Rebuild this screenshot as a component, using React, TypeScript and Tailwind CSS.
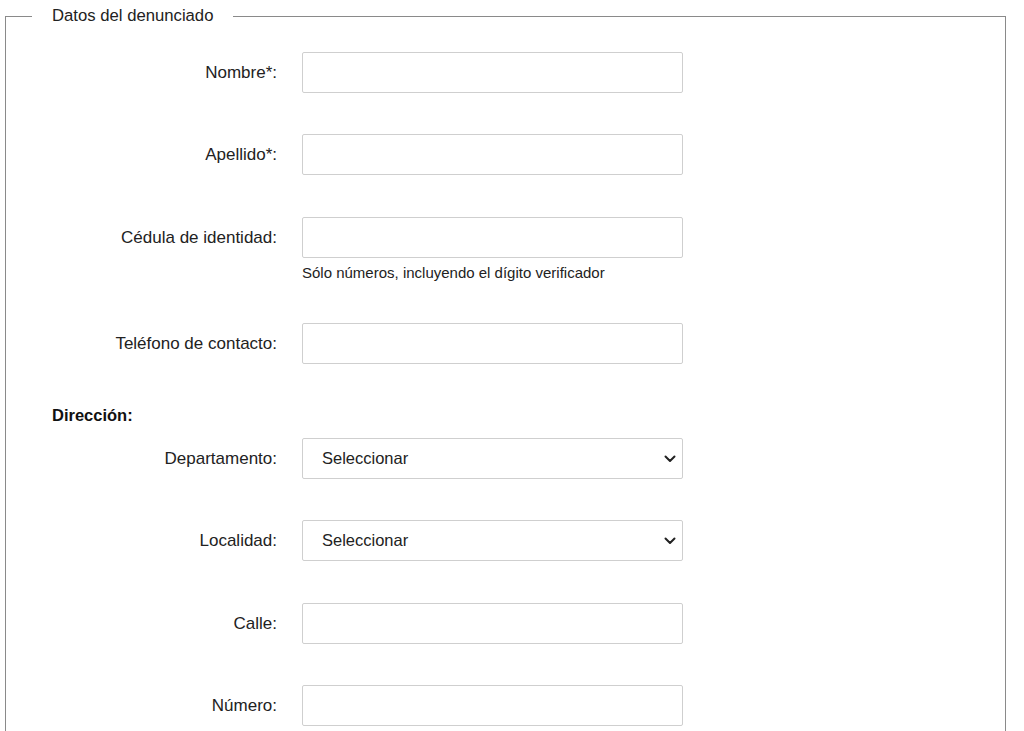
import React from "react";

const font = { fontFamily: '"Liberation Sans", Arial, sans-serif' };

function Chevron() {
  return (
    <svg width="12" height="8" viewBox="0 0 12 8" className="absolute right-[6px] top-1/2 -translate-y-1/2" aria-hidden>
      <path d="M1.5 1.5 L6 6 L10.5 1.5" fill="none" stroke="#222" strokeWidth="2" strokeLinecap="round" strokeLinejoin="round" />
    </svg>
  );
}

function Row({ label, select, help }: { label: string; select?: boolean; help?: string }) {
  return (
    <div className="flex items-start">
      <div className="w-[271px] h-[41px] flex items-center justify-end text-[17px] text-[#222]">{label}</div>
      <div className="ml-[25px] w-[381px]">
        {select ? (
          <div className="relative h-[41px] border border-[#cfcfcf] rounded-[2px] bg-white flex items-center pl-[19px] text-[16.5px] text-[#222]">
            Seleccionar
            <Chevron />
          </div>
        ) : (
          <div className="h-[41px] border border-[#cfcfcf] rounded-[2px] bg-white" />
        )}
        {help && <div className="mt-[6px] text-[15px] leading-[17px] text-[#222]">{help}</div>}
      </div>
    </div>
  );
}

export default function App() {
  return (
    <div className="w-[1024px] h-[731px] overflow-hidden bg-white" style={font}>
      <fieldset className="mt-[7px] ml-[5px] w-[1001px] border border-[#8a8a8a] border-b-0 h-[800px]">
        <legend className="ml-[26px] px-5 text-[16.7px] leading-[18px] text-[#222]">Datos del denunciado</legend>
        <div className="pt-[27px] flex flex-col">
          <Row label="Nombre*:" />
          <div className="h-[41px]" />
          <Row label="Apellido*:" />
          <div className="h-[42px]" />
          <Row label="Cédula de identidad:" help="Sólo números, incluyendo el dígito verificador" />
          <div className="h-[42px]" />
          <Row label="Teléfono de contacto:" />
          <div className="h-[42px]" />
          <div className="pl-[46px] text-[16.5px] leading-[18px] font-bold text-[#111]">Dirección:</div>
          <div className="h-[14px]" />
          <Row label="Departamento:" select />
          <div className="h-[41px]" />
          <Row label="Localidad:" select />
          <div className="h-[42px]" />
          <Row label="Calle:" />
          <div className="h-[41px]" />
          <Row label="Número:" />
        </div>
      </fieldset>
    </div>
  );
}
